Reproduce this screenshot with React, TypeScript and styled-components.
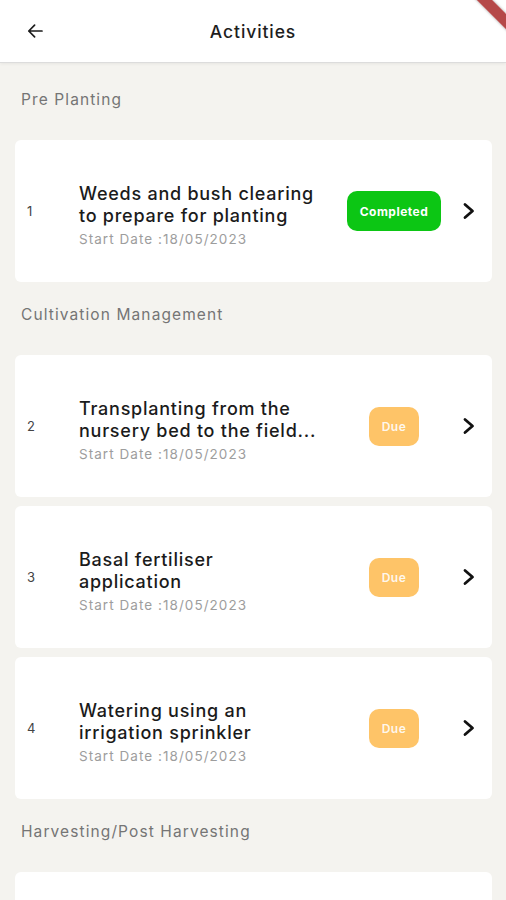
import styled, {createGlobalStyle} from "styled-components";

const GlobalStyle = createGlobalStyle`
  html, body {
    margin: 0;
    padding: 0;
    background-color: #f4f3ef;
    font-family: Inter, "Noto Sans", "Liberation Sans", sans-serif;
  }
`

const Screen = styled.div`
  position: relative;
  width: 506px;
  min-height: 900px;
  overflow: hidden;
  background-color: #f4f3ef;
`

const Header = styled.header`
  display: flex;
  align-items: center;
  height: 62px;
  background-color: white;
  border-bottom: 1px solid #dcdcdc;
  box-shadow: 0 1px 3px rgba(0,0,0,0.06);
  position: relative;
`

const BackButton = styled.div`
  width: 70px;
  display: flex;
  align-items: center;
  justify-content: center;
  height: 100%;
  cursor: pointer;
`

const Title = styled.div`
  position: absolute;
  left: 0;
  right: 0;
  padding-top: 1px;
  text-align: center;
  font-size: 17.5px;
  font-weight: 500;
  color: #1e1e1e;
  letter-spacing: 0.9px;
  pointer-events: none;
`

const DebugBanner = styled.div`
  position: absolute;
  left: 465px;
  top: 5px;
  width: 60px;
  height: 11px;
  background-color: rgba(168, 40, 40, 0.85);
  box-shadow: 0 0 3px rgba(0,0,0,0.35);
  transform: rotate(45deg);
`

const Content = styled.div`
  padding: 4px 14px 0 15px;
`

const SectionLabel = styled.div`
  font-size: 15.5px;
  line-height: 20px;
  color: #757575;
  margin: 23px 0 30px 6px;
  letter-spacing: 1.1px;
`

const CardList = styled.div`
  display: flex;
  flex-direction: column;
  gap: 9px;
`

const Card = styled.div`
  display: flex;
  align-items: center;
  height: 142px;
  background-color: white;
  border-radius: 6px;
  padding: 0 11px 0 12px;
  box-sizing: border-box;
`

const Number = styled.div`
  width: 52px;
  font-size: 13px;
  color: #444;
`

const TextBlock = styled.div`
  width: 252px;
  margin-top: 8px;
`

const ActivityName = styled.div`
  font-size: 18px;
  line-height: 22px;
  font-weight: 500;
  color: #1b1b1b;
  letter-spacing: 0.75px;
  white-space: nowrap;
`

const StartDate = styled.div`
  margin-top: 3px;
  font-size: 13.5px;
  line-height: 18px;
  color: #9d9d9d;
  letter-spacing: 1.05px;
`

const BadgeZone = styled.div`
  flex: 1;
  display: flex;
  justify-content: center;
`

const Badge = styled.div<{ $status: "Completed" | "Due" }>`
  display: flex;
  align-items: center;
  justify-content: center;
  height: ${p => p.$status === "Completed" ? 40 : 39}px;
  width: ${p => p.$status === "Completed" ? 94 : 50}px;
  border-radius: 10px;
  background-color: ${p => p.$status === "Completed" ? "#0cc614" : "#fec468"};
  color: ${p => p.$status === "Completed" ? "#ffffff" : "rgba(255,255,255,0.9)"};
  font-size: 12px;
  letter-spacing: 0.5px;
  font-weight: ${p => p.$status === "Completed" ? 700 : 600};
`

const Chevron = styled.div`
  width: 24px;
  display: flex;
  justify-content: center;
`

type Activity = {
    no: number
    lines: string[]
    status: "Completed" | "Due"
}

const sections: { title: string, items: Activity[] }[] = [
    {
        title: "Pre Planting",
        items: [
            {no: 1, lines: ["Weeds and bush clearing", "to prepare for planting"], status: "Completed"},
        ]
    },
    {
        title: "Cultivation Management",
        items: [
            {no: 2, lines: ["Transplanting from the", "nursery bed to the field..."], status: "Due"},
            {no: 3, lines: ["Basal fertiliser", "application"], status: "Due"},
            {no: 4, lines: ["Watering using an", "irrigation sprinkler"], status: "Due"},
        ]
    },
    {
        title: "Harvesting/Post Harvesting",
        items: [
            {no: 5, lines: ["Harvesting of", "matured crops"], status: "Due"},
        ]
    },
]

const BackArrow = () => (
    <svg width="16" height="16" viewBox="0 0 16 16" fill="none">
        <path d="M15 8H1.8M7.6 2.2L1.8 8l5.8 5.8" stroke="#1b1b1b" strokeWidth="1.7" strokeLinecap="round"
              strokeLinejoin="round"/>
    </svg>
)

const ChevronIcon = () => (
    <svg width="14" height="18" viewBox="0 0 14 18" fill="none">
        <path d="M3 2.5L10.5 9L3 15.5" stroke="#111" strokeWidth="2.8" strokeLinecap="round"
              strokeLinejoin="round"/>
    </svg>
)

export default function App() {
    return (
        <>
            <GlobalStyle/>
            <Screen>
                <Header>
                    <BackButton><BackArrow/></BackButton>
                    <Title>Activities</Title>
                </Header>
                <Content>
                    {sections.map(section => (
                        <div key={section.title}>
                            <SectionLabel>{section.title}</SectionLabel>
                            <CardList>
                                {section.items.map(item => (
                                    <Card key={item.no}>
                                        <Number>{item.no}</Number>
                                        <TextBlock>
                                            {item.lines.map(line => (
                                                <ActivityName key={line}>{line}</ActivityName>
                                            ))}
                                            <StartDate>Start Date :18/05/2023</StartDate>
                                        </TextBlock>
                                        <BadgeZone>
                                            <Badge $status={item.status}>{item.status}</Badge>
                                        </BadgeZone>
                                        <Chevron><ChevronIcon/></Chevron>
                                    </Card>
                                ))}
                            </CardList>
                        </div>
                    ))}
                </Content>
                <DebugBanner/>
            </Screen>
        </>
    )
}
